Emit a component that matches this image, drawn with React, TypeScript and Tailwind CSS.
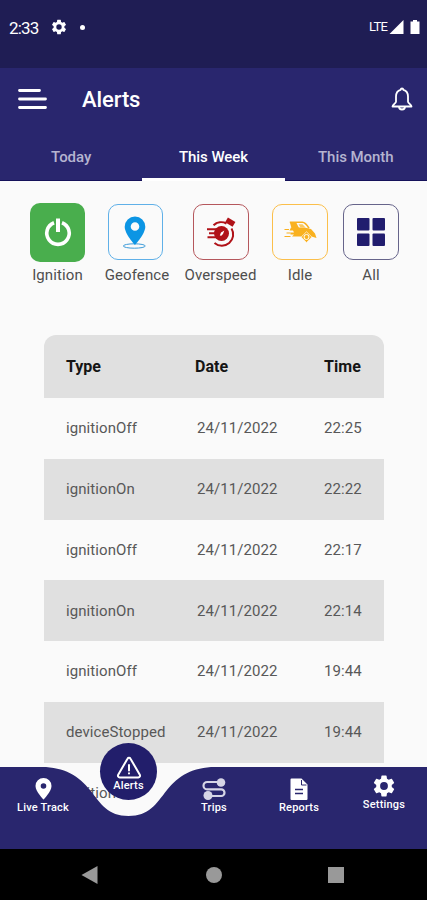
import React, { useState } from 'react';

const tabs = ['Today', 'This Week', 'This Month'];

const rows = [
  { type: 'ignitionOff', date: '24/11/2022', time: '22:25' },
  { type: 'ignitionOn', date: '24/11/2022', time: '22:22' },
  { type: 'ignitionOff', date: '24/11/2022', time: '22:17' },
  { type: 'ignitionOn', date: '24/11/2022', time: '22:14' },
  { type: 'ignitionOff', date: '24/11/2022', time: '19:44' },
  { type: 'deviceStopped', date: '24/11/2022', time: '19:44' },
  { type: 'ignitionOff', date: '24/11/2022', time: '19:40' },
];

const GEAR =
  'M19.14 12.94c.04-.3.06-.61.06-.94s-.02-.64-.07-.94l2.03-1.58a.49.49 0 0 0 .12-.61l-1.92-3.32a.49.49 0 0 0-.59-.22l-2.39.96a7 7 0 0 0-1.62-.94l-.36-2.54A.48.48 0 0 0 13.92 2.4h-3.84a.48.48 0 0 0-.47.41l-.36 2.54c-.59.24-1.13.57-1.62.94l-2.39-.96a.48.48 0 0 0-.59.22L2.74 8.87a.48.48 0 0 0 .12.61l2.03 1.58c-.05.3-.09.63-.09.94s.02.64.07.94l-2.03 1.58a.49.49 0 0 0-.12.61l1.92 3.32c.12.22.37.29.59.22l2.39-.96c.5.38 1.03.7 1.62.94l.36 2.54c.05.24.24.41.48.41h3.84c.24 0 .44-.17.47-.41l.36-2.54a7 7 0 0 0 1.62-.94l2.39.96c.22.08.47 0 .59-.22l1.92-3.32a.48.48 0 0 0-.12-.61ZM12 15.6a3.6 3.6 0 1 1 0-7.2 3.6 3.6 0 0 1 0 7.2Z';

const PIN = 'M12 1a8 8 0 0 0-8 8c0 5.6 8 13.5 8 13.5s8-7.9 8-13.5a8 8 0 0 0-8-8Zm0 10.8a2.8 2.8 0 1 1 0-5.6 2.8 2.8 0 0 1 0 5.6Z';

function Glyph({ d, className }: { d: string; className: string }) {
  return (
    <svg viewBox="0 0 24 24" fill="currentColor" className={className}>
      <path d={d} fillRule="evenodd" />
    </svg>
  );
}

function PowerIcon() {
  return (
    <svg width="30" height="32" viewBox="0 0 30 32" fill="none" stroke="#fff">
      <path d="M11 6.7a11.2 11.2 0 1 0 8 0" strokeWidth="3.6" />
      <path d="M15 2.5v13.5" strokeWidth="4" />
    </svg>
  );
}

function GeofenceIcon() {
  return (
    <svg width="26" height="34" viewBox="0 0 26 34">
      <ellipse cx="12.3" cy="31" rx="11" ry="2.2" fill="none" stroke="#3c9bd9" strokeWidth="1" />
      <path
        d="M13 1.5A10.3 10.3 0 0 0 2.7 11.8C2.7 19 13 30 13 30s10.3-11 10.3-18.2A10.3 10.3 0 0 0 13 1.5Zm0 14.3a4.3 4.3 0 1 1 0-8.6 4.3 4.3 0 0 1 0 8.6Z"
        fill="#0c95e4"
      />
    </svg>
  );
}

function OverspeedIcon() {
  return (
    <svg width="30" height="32" viewBox="0 0 30 32" fill="none" stroke="#b01218">
      <path d="M7.500 9.300A11.200 11.200 0 0 1 20.500 7.500M25.500 12.500A11.300 11.300 0 0 1 8.500 27" strokeWidth="2" />
      <circle cx="15.500" cy="17.500" r="7.500" fill="#b01218" stroke="none" />
      <path d="M1 13.300h10M3 17.300h8M1.500 21.300h10" strokeWidth="2" />
      <path d="m13.800 19.500 1.200-3 3.300-2-1.300 3.500-1.700 1.700Z" fill="#fff" stroke="none" />
      <path d="m20.500 3.800 7.500 4.500" strokeWidth="5.500" />
    </svg>
  );
}

function IdleIcon() {
  return (
    <svg width="33" height="24" viewBox="0 0 33 24" fill="#f9b11f">
      {/* body */}
      <path d="M7 7.500h13.500l6.500 1.500 4 4.500 1.500 4.500-5-1.500H8l2-2H6.500v-2H10l-1-2H5.500l1.500-3Z" />
      {/* roof */}
      <path d="M5.800 2.300h12.700c2 0 4.200 2.300 6.500 5.900" fill="none" stroke="#f9b11f" strokeWidth="1.600" />
      <path d="M6 3h6.500l2.500 5H7.500L6 3Z" />
      <path d="M14.500 4.300h4l3 3.200h-5l-2-3.200Z" fill="#fbc95f" />
      {/* speed lines */}
      <path d="M.5 9.500h4.500M2.500 13h4M.5 16.500h6" stroke="#f9b11f" strokeWidth="1" />
      {/* wheel */}
      <path d="m22.500 11.800 5.300 5.200-5.300 5.500-5.300-5.500 5.300-5.200Z" stroke="#fff3dc" strokeWidth=".8" />
      <circle cx="22.500" cy="17" r="2.500" fill="none" stroke="#fff" strokeWidth="1" />
    </svg>
  );
}

function GridIcon() {
  return (
    <svg width="28" height="28" viewBox="0 0 28 28" fill="#211d6e">
      <rect width="12.5" height="12.5" rx="1" />
      <rect x="15.5" width="12.5" height="12.5" rx="1" />
      <rect y="15.5" width="12.5" height="12.5" rx="1" />
      <rect x="15.5" y="15.5" width="12.5" height="12.5" rx="1" />
    </svg>
  );
}

const filters = [
  { label: 'Ignition', icon: <PowerIcon />, col: 'w-[55px]', box: 'h-[59px] w-[55px] bg-[#49ae4d]' },
  { label: 'Geofence', icon: <GeofenceIcon />, col: 'ml-[19px] w-[66px]', box: 'mr-1 h-[56px] w-[55px] border border-[#5fb0e8]' },
  { label: 'Overspeed', icon: <OverspeedIcon />, col: 'ml-[14px] w-[73px]', box: 'h-[56px] w-[56px] border border-[#b5575c]' },
  { label: 'Idle', icon: <IdleIcon />, col: 'ml-[15px] w-[56px]', box: 'h-[56px] w-[56px] border border-[#fbbf4a]' },
  { label: 'All', icon: <GridIcon />, col: 'ml-[15px] w-[56px]', box: 'h-[56px] w-[56px] border border-[#66648a]' },
];

function StatusBar() {
  return (
    <div className="flex h-[68px] shrink-0 items-start bg-[#1f1d54] text-white">
      <span className="ml-[9px] mt-[18px] w-[41px] text-[17px] leading-5 tracking-[-0.8px]">2:33</span>
      <Glyph d={GEAR} className="mt-[18px] h-[18px] w-[18px]" />
      <span className="ml-[12px] mt-[25px] h-[5px] w-[5px] rounded-full bg-white" />
      <span className="ml-auto mt-[19px] text-[13px] leading-4 tracking-[-0.8px]">LTE</span>
      <svg width="32" height="16" viewBox="0 0 32 16" fill="#fff" className="ml-0.5 mr-[6px] mt-[19px]">
        <path d="M14.5 1v14H.5l14-14Z" />
        <path d="M21.500 2.500h2.500V1h4v1.500h2.500V15h-9V2.500Z" />
      </svg>
    </div>
  );
}

function NavItem({ label, className, children }: { label: string; className: string; children: React.ReactNode }) {
  return (
    <button className={`flex flex-col items-center text-[11px] font-medium leading-3 tracking-[0.2px] text-white ${className}`}>
      {children}
      {label}
    </button>
  );
}

function BottomNav() {
  return (
    <nav className="absolute bottom-[51px] left-0 h-[82px] w-full">
      <svg viewBox="0 0 427 82" className="absolute inset-0 h-[82px] w-[427px]">
        <path
          d="M0 0H42C64 0 79 9 90 23C101 37 108 49 128.5 49C149 49 156 37 167 23C178 9 193 0 215 0H427V82H0Z"
          fill="#29266e"
        />
      </svg>
      <div className="relative flex">
        <NavItem label="Live Track" className="mt-[10px] w-[86px]">
          <Glyph d={PIN} className="mb-px h-[24px] w-[25px]" />
        </NavItem>
        <NavItem label="Alerts" className="-mt-6 ml-[14px] h-[57px] w-[57px] rounded-full bg-[#221e6b] pt-[13px]">
          <svg width="26" height="24" viewBox="0 0 26 24" fill="none" stroke="#fff" strokeLinecap="round" strokeLinejoin="round">
            <path d="M11.5 2.7 2.2 18.8a1.8 1.8 0 0 0 1.5 2.7h18.600a1.800 1.800 0 0 0 1.500-2.700L14.500 2.700a1.700 1.700 0 0 0-3 0Z" strokeWidth="2" />
            <path d="M13 9v5.500M13 17.300v.2" strokeWidth="2" />
          </svg>
        </NavItem>
        <NavItem label="Trips" className="ml-[14px] mt-[10px] w-[86px]">
          <svg width="26" height="24" viewBox="0 0 26 24" fill="none" stroke="#d6d5e6" strokeWidth="2.200" className="mb-px">
            <path d="M17 5H6.200a3.700 3.700 0 0 0 0 7.400h14a3.300 3.300 0 0 1 0 6.600H10" />
            <circle cx="20" cy="5.500" r="4.300" fill="#d6d5e6" stroke="none" />
            <circle cx="7" cy="18.500" r="4.500" fill="#d6d5e6" stroke="none" />
          </svg>
        </NavItem>
        <NavItem label="Reports" className="mt-[10px] w-[84px]">
          <svg width="18" height="24" viewBox="0 0 18 24" className="mb-px">
            <path d="M1.500 1.500h10l6 6V22a1 1 0 0 1-1 1h-15a1 1 0 0 1-1-1V2.500a1 1 0 0 1 1-1Z" fill="#fff" />
            <path d="M11.500 3v5h5" fill="none" stroke="#29266e" />
            <path d="M5 12.500h8M5 16.500h8" stroke="#29266e" strokeWidth="1.500" />
          </svg>
        </NavItem>
        <NavItem label="Settings" className="mt-[6px] w-[86px]">
          <Glyph d={GEAR} className="h-[26px] w-[28px]" />
        </NavItem>
      </div>
    </nav>
  );
}

export default function App() {
  const [active, setActive] = useState('This Week');

  return (
    <div className="relative flex h-[900px] w-[427px] flex-col overflow-hidden bg-[#fafafa] font-['Roboto',sans-serif]">
      <StatusBar />

      <header className="flex h-[113px] shrink-0 flex-col bg-[#29266e] text-white">
        <div className="flex h-[65px] items-center">
          <svg width="30" height="24" viewBox="0 0 30 24" stroke="#fff" strokeWidth="2.8" strokeLinecap="round" className="-mt-1 ml-[18px]">
            <path d="M1.5 3.5H21.5M1.5 12H27.5M1.5 20.5H27.5" />
          </svg>
          <h1 className="-mt-0.5 ml-[34px] text-[22px] font-medium leading-7 tracking-[-0.1px]">Alerts</h1>
          <svg width="24" height="26" viewBox="0 0 24 26" fill="none" stroke="#fff" strokeWidth="1.8" strokeLinejoin="round" className="-mt-1 ml-auto mr-[13px]">
            <path d="M12 2.5c-.9 0-1.3.6-1.4 1.3C7.6 4.6 6 7 6 10.5v5.3c0 1.2-3.5 3.3-3.5 4.7h19c0-1.4-3.5-3.5-3.5-4.7v-5.3c0-3.5-1.6-5.9-4.6-6.7-.1-.7-.5-1.3-1.4-1.3Z" />
            <path d="M9 20.5a3 3 0 0 0 6 0" />
          </svg>
        </div>
        <div className="grid h-12 grid-cols-3 border-b border-[#15115a]">
          {tabs.map((tab) => (
            <button
              key={tab}
              onClick={() => setActive(tab)}
              className={`-mb-px border-b-[3px] pt-1 text-[15px] font-medium tracking-[-0.05px] ${active === tab ? 'border-white text-white' : 'border-transparent text-[#b5b4d0]'}`}
            >
              {tab}
            </button>
          ))}
        </div>
      </header>

      <main className="flex flex-col">
        <div className="flex h-[154px] items-start pl-[30px] pt-[21px]">
          {filters.map((f) => (
            <div key={f.label} className={`flex h-[83px] flex-col items-center ${f.col}`}>
              <div className="flex h-[61px] items-center justify-center">
                <div className={`flex items-center justify-center rounded-[10px] ${f.box}`}>{f.icon}</div>
              </div>
              <span className="mt-[3px] whitespace-nowrap text-[15px] leading-5 tracking-[0.1px] text-[#4e4e4e]">{f.label}</span>
            </div>
          ))}
        </div>

        <table className="mx-[44px] w-[340px] table-fixed overflow-hidden rounded-t-xl text-left">
          <thead>
            <tr className="h-[63px] bg-[#e0e0e0] text-base font-bold text-[#151515]">
              <th className="w-[151px] pl-[22px]">Type</th>
              <th className="w-[129px]">Date</th>
              <th className="w-[60px] tracking-[0.1px]">Time</th>
            </tr>
          </thead>
          <tbody className="text-[15px] tracking-[0.08px] text-[#585858]">
            {rows.map((row, i) => (
              <tr key={i} className="h-[60.8px] even:bg-[#e0e0e0]">
                <td className="pl-[22px]">{row.type}</td>
                <td className="pl-0.5">{row.date}</td>
                <td>{row.time}</td>
              </tr>
            ))}
          </tbody>
        </table>
      </main>

      <BottomNav />

      <div className="absolute bottom-0 left-0 flex h-[51px] w-full items-center bg-black">
        <svg width="17" height="20" viewBox="0 0 17 20" fill="#999" className="ml-[81px]">
          <path d="M16.5 1v18L.5 10 16.5 1Z" />
        </svg>
        <span className="ml-[108px] h-4 w-4 rounded-full bg-[#999]" />
        <span className="ml-[106px] h-4 w-4 bg-[#999]" />
      </div>
    </div>
  );
}
